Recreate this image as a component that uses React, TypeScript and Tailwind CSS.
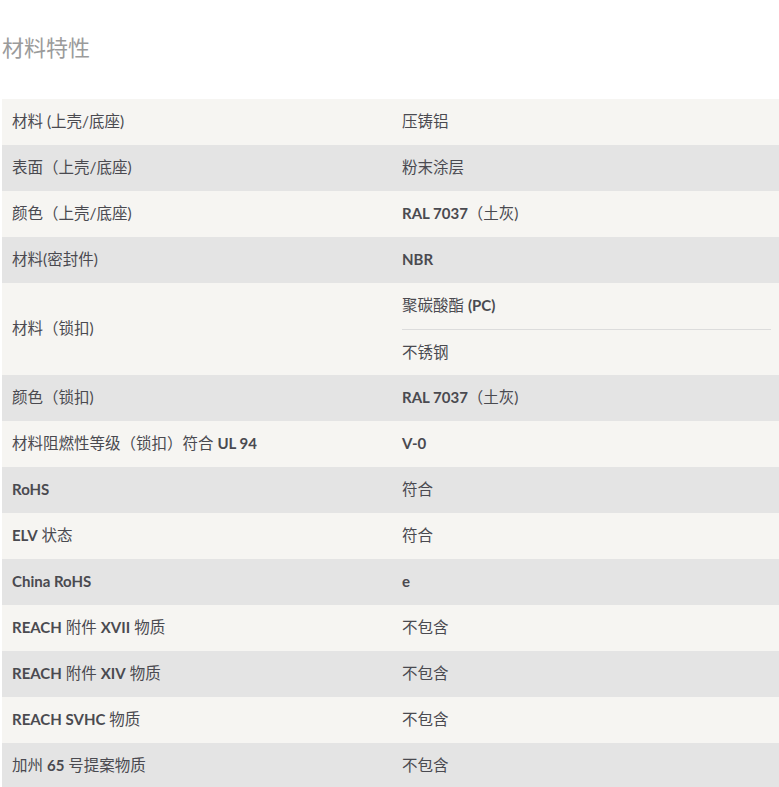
import React from 'react';

type Part = string | { b: string };
type Row = { label: Part[]; values: Part[][] };

const rows: Row[] = [
  { label: ['材料 (上壳/底座)'], values: [['压铸铝']] },
  { label: ['表面（上壳/底座)'], values: [['粉末涂层']] },
  { label: ['颜色（上壳/底座)'], values: [[{ b: 'RAL 7037' }, '（土灰)']] },
  { label: ['材料(密封件)'], values: [[{ b: 'NBR' }]] },
  { label: ['材料（锁扣)'], values: [['聚碳酸酯 ', { b: '(PC)' }], ['不锈钢']] },
  { label: ['颜色（锁扣)'], values: [[{ b: 'RAL 7037' }, '（土灰)']] },
  { label: ['材料阻燃性等级（锁扣）符合 ', { b: 'UL 94' }], values: [[{ b: 'V-0' }]] },
  { label: [{ b: 'RoHS' }], values: [['符合']] },
  { label: [{ b: 'ELV' }, ' 状态'], values: [['符合']] },
  { label: [{ b: 'China RoHS' }], values: [[{ b: 'e' }]] },
  { label: [{ b: 'REACH' }, ' 附件 ', { b: 'XVII' }, ' 物质'], values: [['不包含']] },
  { label: [{ b: 'REACH' }, ' 附件 ', { b: 'XIV' }, ' 物质'], values: [['不包含']] },
  { label: [{ b: 'REACH SVHC' }, ' 物质'], values: [['不包含']] },
  { label: ['加州 ', { b: '65' }, ' 号提案物质'], values: [['不包含']] },
];

function Text({ parts }: { parts: Part[] }) {
  return (
    <span className="whitespace-pre">
      {parts.map((p, i) =>
        typeof p === 'string' ? (
          <span key={i}>{p}</span>
        ) : (
          <span key={i} className="text-[15px] font-bold">
            {p.b}
          </span>
        )
      )}
    </span>
  );
}

export default function App() {
  return (
    <div
      className="min-h-screen bg-white pl-[2px] text-[#4a4a50]"
      style={{ fontFamily: 'Lato, "Noto Sans CJK SC", sans-serif' }}
    >
      {/* Title */}
      <h2 className="h-[99px] pt-[33px] text-[22px] leading-[30px] text-[#9b9b9b]">材料特性</h2>

      {/* Spec table */}
      <div className="flex flex-col text-[15.5px]">
        {rows.map((row, i) => (
          <div
            key={i}
            className={`flex ${i % 2 === 0 ? 'bg-[#f6f5f2]' : 'bg-[#e4e4e4]'}`}
          >
            <div className="flex w-[390px] shrink-0 items-center px-[10px]">
              <Text parts={row.label} />
            </div>
            <div className="flex flex-1 flex-col pl-[10px] pr-[8px]">
              {row.values.map((v, j) => (
                <div
                  key={j}
                  className={`flex h-[46px] items-center ${j > 0 ? 'border-t border-[#dcdcdc]' : ''}`}
                >
                  <Text parts={v} />
                </div>
              ))}
            </div>
          </div>
        ))}
      </div>
    </div>
  );
}
